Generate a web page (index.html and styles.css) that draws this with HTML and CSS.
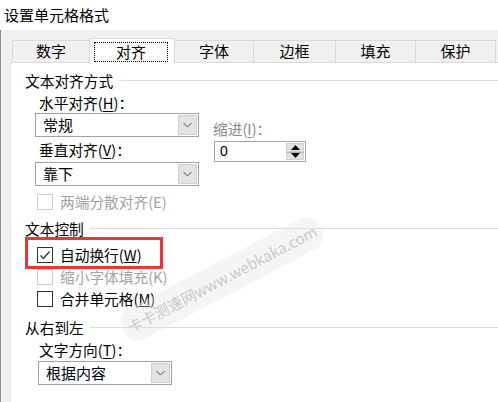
FILE: index.html
```html
<!DOCTYPE html>
<html lang="zh-CN">
<head>
<meta charset="utf-8">
<title>设置单元格格式</title>
<link rel="stylesheet" href="styles.css">
</head>
<body>
<div class="page">
  <div class="titlebar">设置单元格格式</div>
  <div class="body">
    <div class="tabs">
      <div class="tab t1">数字</div>
      <div class="tab t2 active"><span class="focus">对齐</span></div>
      <div class="tab t3">字体</div>
      <div class="tab t4">边框</div>
      <div class="tab t5">填充</div>
      <div class="tab t6">保护</div>
    </div>
    <div class="panel">
      <div class="group-head"><span>文本对齐方式</span></div>
      <div class="align-row">
        <div class="col-left">
          <div class="label l-h">水平对齐(<u>H</u>)：</div>
          <div class="combo combo-w"><span class="combo-text">常规</span><span class="combo-btn"><svg width="9" height="6" viewBox="0 0 9 6"><polyline points="0.5,1 4.5,5 8.5,1" fill="none" stroke="#555" stroke-width="1"/></svg></span></div>
          <div class="label l-v">垂直对齐(<u>V</u>)：</div>
          <div class="combo combo-w"><span class="combo-text">靠下</span><span class="combo-btn"><svg width="9" height="6" viewBox="0 0 9 6"><polyline points="0.5,1 4.5,5 8.5,1" fill="none" stroke="#555" stroke-width="1"/></svg></span></div>
        </div>
        <div class="col-right">
          <div class="label dim l-i">缩进(<u>I</u>)：</div>
          <div class="spin">
            <span class="spin-text">0</span>
            <span class="spin-btns">
              <span class="spin-b"><svg width="9" height="5" viewBox="0 0 9 5"><polygon points="0,5 9,5 4.5,0" fill="#000"/></svg></span>
              <span class="spin-b"><svg width="9" height="5" viewBox="0 0 9 5"><polygon points="0,0 9,0 4.5,5" fill="#000"/></svg></span>
            </span>
          </div>
        </div>
      </div>
      <div class="check-row first disabled"><span class="box"></span><span class="ctext">两端分散对齐(E)</span></div>

      <div class="group-head g2"><span>文本控制</span></div>
      <div class="check-row c1"><span class="box"><svg width="14" height="14" viewBox="0 0 14 14"><polyline points="2.5,7.5 5.5,10.5 11.5,3.5" fill="none" stroke="#333" stroke-width="1.3"/></svg></span><span class="ctext">自动换行(<u>W</u>)</span></div>
      <div class="check-row disabled"><span class="box"></span><span class="ctext">缩小字体填充(K)</span></div>
      <div class="check-row"><span class="box"></span><span class="ctext">合并单元格(<u>M</u>)</span></div>

      <div class="group-head g3"><span>从右到左</span></div>
      <div class="label l-t">文字方向(<u>T</u>)：</div>
      <div class="combo combo-n"><span class="combo-text">根据内容</span><span class="combo-btn"><svg width="9" height="6" viewBox="0 0 9 6"><polyline points="0.5,1 4.5,5 8.5,1" fill="none" stroke="#555" stroke-width="1"/></svg></span></div>
    </div>
  </div>
  <div class="annot"></div>
  <div class="watermark">卡卡测速网www.webkaka.com</div>
</div>
</body>
</html>
```

FILE: styles.css
```css
html, body {
  margin: 0;
  padding: 0;
  background: #fff;
}
.page {
  position: relative;
  width: 498px;
  height: 402px;
  overflow: hidden;
  font-family: "Noto Sans CJK SC", "Noto Sans", sans-serif;
  color: #000;
}
.titlebar {
  height: 30px;
  line-height: 30px;
  padding-left: 4px;
  font-size: 15px;
  background: #fff;
}
.body {
  height: 372px;
  background: #f0f0f0;
  border-left: 1px solid #8e8e8e;
  box-sizing: border-box;
  padding-left: 9px;
  padding-top: 8px;
  display: flex;
  flex-direction: column;
}
.tabs {
  display: flex;
  align-items: flex-end;
  height: 24px;
  margin-left: 2px;
  position: relative;
  z-index: 2;
}
.tab {
  box-sizing: border-box;
  height: 22px;
  border: 1px solid #d9d9d9;
  border-bottom: none;
  margin-left: -1px;
  background: #f0f0f0;
  font-size: 15px;
  line-height: 20px;
  text-align: center;
}
.t1 { width: 78px; margin-left: 0; }
.t2 { width: 86px; }
.t3 { width: 80px; }
.t4 { width: 83px; }
.t5 { width: 81px; }
.t6 { width: 81px; }
.tab.active {
  height: 25px;
  margin-bottom: -1px;
  background: #fff;
  display: flex;
  justify-content: flex-start;
  align-items: flex-start;
  padding-top: 3px;
  padding-left: 4px;
}
.focus {
  display: block;
  box-sizing: border-box;
  width: 74px;
  height: 20px;
  border: 1px dotted #000;
  line-height: 18px;
  text-align: center;
}
.panel {
  flex: 1;
  background: #fff;
  border-top: 1px solid #d9d9d9;
  border-left: 1px solid #e3e3e3;
  padding-left: 14px;
  display: flex;
  flex-direction: column;
  align-items: flex-start;
  font-size: 14.7px;
}
.group-head {
  align-self: stretch;
  display: flex;
  align-items: center;
  height: 22px;
  line-height: 22px;
  margin-top: 7px;
}
.group-head::after {
  content: "";
  flex: 1;
  height: 1px;
  background: #dcdcdc;
  margin-left: 6px;
  margin-top: -2px;
}
.g2 { margin-top: 4px; }
.g3 { margin-top: 7px; }
.align-row {
  display: flex;
  align-items: flex-start;
}
.col-left {
  display: flex;
  flex-direction: column;
  align-items: flex-start;
}
.col-right {
  display: flex;
  flex-direction: column;
  align-items: flex-start;
  margin-left: 14px;
  padding-top: 26px;
}
.label {
  margin-left: 14px;
  white-space: nowrap;
}
.label u { text-underline-offset: 2px; }
.l-h { height: 21px; line-height: 21px; }
.l-v { height: 25px; line-height: 25px; }
.l-t { height: 22px; line-height: 22px; }
.l-i { height: 22px; line-height: 22px; margin-left: 0; }
.dim { color: #8a8a8a; }
.combo {
  box-sizing: border-box;
  height: 24px;
  border: 1px solid #a2a2a2;
  background: #fff;
  display: flex;
  align-items: stretch;
}
.combo-w { width: 164px; margin-left: 10px; }
.combo-n { width: 134px; margin-left: 13px; }
.combo-text {
  flex: 1;
  padding-left: 7px;
  line-height: 22px;
  font-size: 15px;
}
.combo-btn {
  box-sizing: border-box;
  width: 19px;
  margin: 1px;
  background: #e3e3e3;
  border: 1px solid #cfcfcf;
  display: flex;
  align-items: center;
  justify-content: center;
}
.spin {
  box-sizing: border-box;
  width: 92px;
  height: 21px;
  margin-top: 1px;
  margin-left: 1px;
  border: 1px solid #a2a2a2;
  display: flex;
  align-items: stretch;
}
.spin-text {
  flex: 1;
  padding-left: 5px;
  line-height: 19px;
  font-size: 14px;
  font-family: "Liberation Sans", sans-serif;
}
.spin-btns {
  width: 18px;
  margin: 1px;
  display: flex;
  flex-direction: column;
}
.spin-b {
  flex: 1;
  box-sizing: border-box;
  background: #e3e3e3;
  border: 1px solid #cfcfcf;
  display: flex;
  align-items: center;
  justify-content: center;
}
.spin-b + .spin-b { border-top: 1px solid #b0b0b0; }
.check-row {
  display: flex;
  align-items: center;
  height: 22px;
  margin-left: 12px;
  white-space: nowrap;
}
.check-row.first {
  height: 24px;
  margin-top: 4px;
}
.check-row.c1 { margin-top: 4px; }
.box {
  box-sizing: border-box;
  width: 16px;
  height: 16px;
  border: 1px solid #333;
  background: #fff;
  display: flex;
  align-items: center;
  justify-content: center;
}
.ctext {
  margin-left: 7px;
  line-height: 22px;
}
.disabled .box { border-color: #cccccc; }
.disabled .ctext { color: #a3a3a3; }
.annot {
  position: absolute;
  left: 25px;
  top: 237px;
  width: 138px;
  height: 32px;
  box-sizing: border-box;
  border: 3px solid #ee3535;
  z-index: 3;
}
.watermark {
  position: absolute;
  left: 111px;
  top: 262px;
  width: 222px;
  height: 34px;
  line-height: 34px;
  text-align: center;
  border-radius: 14px;
  background: rgba(225, 225, 225, 0.35);
  color: #c9c9c9;
  font-family: "Noto Sans CJK SC", "DejaVu Sans", sans-serif;
  font-size: 15px;
  transform: rotate(-27.7deg);
  white-space: nowrap;
  z-index: 4;
}
```
